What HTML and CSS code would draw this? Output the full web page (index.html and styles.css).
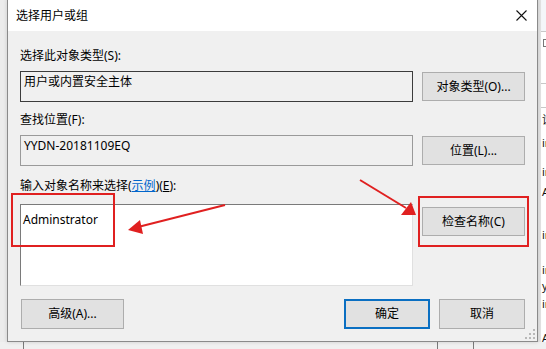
FILE: index.html
```html
<!DOCTYPE html>
<html lang="zh-CN">
<head>
<meta charset="utf-8">
<title>选择用户或组</title>
<link rel="stylesheet" href="styles.css">
</head>
<body>
<div class="desktop">
  <div class="behind-right">
    <span class="frag" style="top:0px;height:31px"></span>
    <span class="hline" style="top:31px"></span>
    <span class="chk" style="top:39px"></span>
    <span class="hline" style="top:83px"></span>
    <span class="hline" style="top:107px"></span>
    <span class="txt" style="top:114px">设</span>
    <span class="txt" style="top:137px">in</span>
    <span class="txt" style="top:166px">in</span>
    <span class="txt" style="top:186px">A</span>
    <span class="txt" style="top:229px">in</span>
    <span class="txt" style="top:264px">in</span>
    <span class="txt" style="top:280px">y</span>
    <span class="txt" style="top:298px">in</span>
    <span class="txt" style="top:332px">A</span>
  </div>
  <div class="behind-bottom">
    <span class="vline" style="left:23px"></span>
    <span class="vline" style="left:437px"></span>
    <span class="vline" style="left:473px"></span>
  </div>

  <div class="dialog">
    <div class="titlebar">
      <span class="title">选择用户或组</span>
      <svg class="close" width="11" height="11" viewBox="0 0 11 11"><path d="M0.5 0.5 L10.5 10.5 M10.5 0.5 L0.5 10.5" stroke="#111" stroke-width="1.1" fill="none"/></svg>
    </div>
    <div class="content">
      <div class="label">选择此对象类型(S):</div>
      <div class="row row-center">
        <div class="field readonly dark">用户或内置安全主体</div>
        <button class="btn">对象类型(O)...</button>
      </div>

      <div class="label label-2">查找位置(F):</div>
      <div class="row row-center">
        <div class="field readonly light">YYDN-20181109EQ</div>
        <button class="btn">位置(L)...</button>
      </div>

      <div class="label label-3">输入对象名称来选择(<a class="link">示例</a>)(<u>E</u>):</div>
      <div class="row row-top">
        <div class="field multi">Adminstrator</div>
        <button class="btn btn-check">检查名称(C)</button>
      </div>

      <div class="footer">
        <button class="btn btn-adv">高级(A)...</button>
        <div class="spacer"></div>
        <button class="btn btn-small btn-default">确定</button>
        <button class="btn btn-small">取消</button>
      </div>
    </div>
    <svg class="grip" width="10" height="10" viewBox="0 0 10 10">
      <rect x="8" y="0" width="2" height="2" fill="#b8b8b8"/>
      <rect x="4" y="4" width="2" height="2" fill="#b8b8b8"/>
      <rect x="8" y="4" width="2" height="2" fill="#b8b8b8"/>
      <rect x="0" y="8" width="2" height="2" fill="#b8b8b8"/>
      <rect x="4" y="8" width="2" height="2" fill="#b8b8b8"/>
      <rect x="8" y="8" width="2" height="2" fill="#b8b8b8"/>
    </svg>
  </div>

  <svg class="annot" width="546" height="349" viewBox="0 0 546 349">
    <rect x="12" y="194" width="102" height="52" fill="none" stroke="#e02020" stroke-width="2"/>
    <rect x="419" y="197" width="109" height="49" fill="none" stroke="#e02020" stroke-width="2"/>
    <line x1="225" y1="205" x2="138" y2="227" stroke="#e02020" stroke-width="2"/>
    <polygon points="128,230 140,220 143,234" fill="#e02020"/>
    <line x1="360" y1="180" x2="406" y2="208" stroke="#e02020" stroke-width="2"/>
    <polygon points="416,215 401,215 411,202" fill="#e02020"/>
  </svg>
</div>
</body>
</html>
```

FILE: styles.css
```css
* { box-sizing: border-box; }
html, body { margin: 0; padding: 0; }
body {
  width: 546px;
  height: 349px;
  overflow: hidden;
  background: #ececec;
  font-family: "Noto Sans", "Noto Sans CJK SC", sans-serif;
  font-size: 12px;
  color: #000;
}
.desktop {
  position: relative;
  width: 546px;
  height: 349px;
  overflow: hidden;
}

/* background window (right) */
.behind-right {
  position: absolute;
  left: 538px;
  top: 0;
  width: 8px;
  height: 349px;
  background: #fff;
  border-left: 3px solid #e4e4e4;
  overflow: hidden;
}
.behind-right .frag { position: absolute; left: 0; width: 8px; background: #f4f6f9; }
.behind-right .hline { position: absolute; left: 0; width: 8px; height: 1px; background: #c8c8c8; }
.behind-right .chk { position: absolute; left: 2px; width: 6px; height: 8px; border: 1px solid #777; border-right: none; }
.behind-right .txt {
  position: absolute;
  left: 1px;
  font-size: 11px;
  line-height: 11px;
  color: #111;
  white-space: nowrap;
}

/* background window (bottom) */
.behind-bottom {
  position: absolute;
  left: 0;
  top: 342px;
  width: 546px;
  height: 7px;
  background: #f0f0f0;
}
.behind-bottom .vline { position: absolute; top: 0; width: 1px; height: 7px; background: #7a7a7a; }

/* dialog window */
.dialog {
  position: absolute;
  left: 7px;
  top: -1px;
  width: 531px;
  height: 343px;
  border: 1px solid #8a8a8a;
  background: #f0f0f0;
  display: flex;
  flex-direction: column;
  box-shadow: 0 0 4px rgba(0,0,0,0.15);
}
.titlebar {
  height: 31px;
  flex: none;
  background: #fff;
  display: flex;
  align-items: center;
  padding-left: 8px;
}
.title { line-height: 31px; flex: 1; }
.close { margin-right: 10px; margin-top: -1px; }

.content {
  flex: 1;
  padding: 17px 12px 0 12px;
  display: flex;
  flex-direction: column;
}
.label { line-height: 16px; height: 16px; white-space: nowrap; }
.label-2 { margin-top: 10px; }
.label-3 { margin-top: 12px; }
.link { color: #0066cc; text-decoration: underline; }

.row {
  display: grid;
  grid-template-columns: 393px 103px;
  column-gap: 9px;
  margin-top: 7px;
}
.row-center { align-items: center; }
.row-top { align-items: start; margin-top: 10px; }

.field {
  height: 31px;
  line-height: 16px;
  padding: 2px 3px;
  white-space: nowrap;
}
.readonly { background: #f0f0f0; }
.dark { border: 1px solid #3c3c3c; }
.light { border: 1px solid #9a9a9a; }
.multi {
  height: 82px;
  background: #fff;
  padding: 7px 2px;
  border-top: 1px solid #7a7a7a;
  border-left: 1px solid #7a7a7a;
  border-right: 1px solid #e0e0e0;
  border-bottom: 1px solid #e0e0e0;
}

.btn {
  font-family: inherit;
  font-size: 12px;
  color: #000;
  height: 29px;
  background: #e1e1e1;
  border: 1px solid #adadad;
  padding: 0;
  margin: 0;
  line-height: 16px;
  text-align: center;
  border-radius: 0;
}
.btn-check { margin-top: 3px; }

.footer {
  display: flex;
  align-items: center;
  column-gap: 9px;
  margin-top: 13px;
}
.footer .btn { height: 30px; }
.btn-adv { width: 103px; margin-left: 1px; }
.spacer { flex: 1; }
.btn-small { width: 86px; }
.btn-default { border: 2px solid #0a6fc2; }

.grip { position: absolute; right: 2px; bottom: 2px; }

.annot {
  position: absolute;
  left: 0;
  top: 0;
  pointer-events: none;
}
```
